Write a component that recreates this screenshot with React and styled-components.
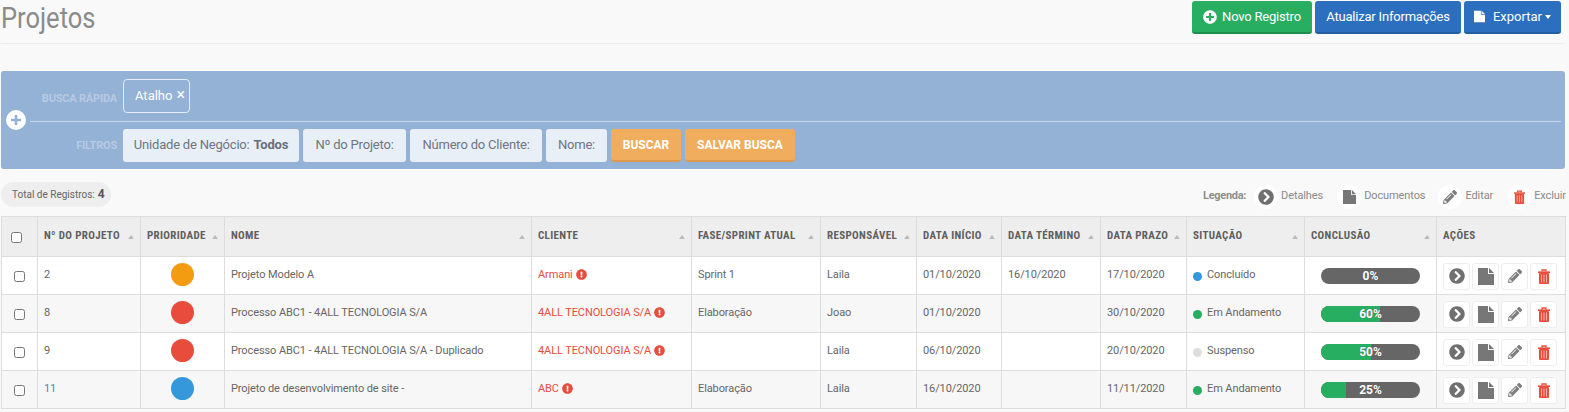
import React from "react";
import styled, { createGlobalStyle } from "styled-components";
import { FaPlusCircle, FaPencilAlt, FaChevronCircleRight, FaExclamationCircle } from "react-icons/fa";

const Global = createGlobalStyle`
  html, body { margin: 0; padding: 0; background: #f9f9f9; }
  body { font-family: Roboto, "Liberation Sans", sans-serif; color: #666; overflow: hidden; }
`;
const Page = styled.div`width: 1569px; height: 412px; padding: 0 4px 0 1px; box-sizing: border-box; overflow: hidden;`;
const Header = styled.header`
  display: flex; justify-content: space-between; align-items: flex-start;
  height: 44px; box-sizing: border-box; border-bottom: 1px solid #eee; padding-top: 1px;
`;
const Title = styled.h1`
  margin: 0; padding: 0; font-weight: 400; font-size: 30px; line-height: 34px; color: #8b8b8b;
  transform: scaleX(0.85); transform-origin: left center;
`;
const Actions = styled.div`display: flex; gap: 3px; margin-right: 4px;`;
const TopButton = styled.button`
  height: 33px; box-sizing: border-box; border: 0; border-bottom: 2px solid ${p => p.$dark}; border-radius: 3px;
  background: ${p => p.$bg}; color: #fff; font: 400 13px Roboto, sans-serif; letter-spacing: ${p => p.$ls ?? -0.2}px; width: ${p => p.$w}px;
  display: flex; align-items: center; justify-content: center; gap: ${p => p.$gap || 5}px; padding: 0;
`;
const Caret = styled.span`width: 0; height: 0; border: 3.5px solid transparent; border-top: 4px solid #fff; border-bottom: 0; margin-left: -5px;`;
const Panel = styled.section`
  position: relative; margin-top: 27px; height: 98px; background: #94b1d6; border-radius: 3px; box-sizing: border-box; padding-top: 8px;
`;
const AddCircle = styled.span`
  position: absolute; left: 5px; top: 39px; width: 20px; height: 20px; border-radius: 50%; background: #fff;
  display: flex; align-items: center; justify-content: center;
`;
const FilterRow = styled.div`
  display: flex; align-items: flex-start; gap: 4px; margin-left: 29px; margin-right: 4px;
  height: ${p => p.$h}px; padding-top: ${p => p.$pt || 0}px; box-sizing: border-box;
  ${p => p.$line && "border-bottom: 1px solid #c8d8eb;"}
`;
const FilterLabel = styled.span`
  width: 87px; margin-right: 2px; margin-top: ${p => p.$mt}px; text-align: right; flex: none; font-size: 11px; font-weight: 700; color: #b8cae3; letter-spacing: -0.2px;
`;
const Chip = styled.span`
  width: 67px; height: 34px; box-sizing: border-box; border: 1px solid #e4ecf6; border-radius: 4px; color: #fff; font-size: 13px;
  display: flex; align-items: center; gap: 4px; padding: 0 0 2px 11px;
`;
const ChipClose = styled.span`font-size: 16px; line-height: 16px;`;
const Filter = styled.span`
  width: ${p => p.$w}px; height: 33px; box-sizing: border-box; background: #e9eff7; border-radius: 3px; color: #6d7683; font-size: 13px; letter-spacing: -0.2px;
  display: flex; align-items: center; justify-content: center; flex: none; white-space: nowrap; padding-bottom: 2px;
  strong { margin-left: 4px; color: #66707c; }
`;
const OrangeButton = styled.button`
  width: ${p => p.$w}px; height: 33px; box-sizing: border-box; border: 0; border-bottom: 2px solid #dd9a4e; border-radius: 3px; background: #f0ad5e;
  color: #fff; font: 700 12px Roboto, sans-serif; padding: 0; flex: none;
`;
const InfoBar = styled.div`display: flex; justify-content: space-between; align-items: center; height: 47px; box-sizing: border-box; padding-top: 3px;`;
const Total = styled.span`
  width: 110px; height: 25px; border-radius: 13px; background: #eee; color: #666; font-size: 10px; display: flex; align-items: center; box-sizing: border-box; padding-left: 11px;
  strong { margin-left: 3px; font-size: 12px; color: #555; }
`;
const Legend = styled.div`display: flex; align-items: center; font-size: 11px; color: #8a8a8a; margin-right: -1px;`;
const LegendTitle = styled.strong`margin: 2px 8px 0 0; font-weight: 700; color: #8e8e8e; font-size: 11px; letter-spacing: -0.3px;`;
const LegendItem = styled.span`display: flex; align-items: center; gap: 3px; margin-right: ${p => p.$mr}px;`;
const LegendCircle = styled.span`
  width: 24px; height: 24px; border-radius: 50%; background: #fff; display: flex; align-items: center; justify-content: center; margin-top: 6px; flex: none;
`;
const LegendText = styled.span`margin-top: 2px; letter-spacing: -0.1px;`;
const Table = styled.table`
  width: 1564px; border-collapse: collapse; table-layout: fixed; font-size: 11px; color: #666; letter-spacing: -0.1px;
`;
const Th = styled.th`
  height: 40px; box-sizing: border-box; background: #eee; border: 1px solid #ddd; padding: 0 6px; text-align: left; vertical-align: middle;
  font-size: 11px; font-weight: 700; font-stretch: 75%; color: #5f5f5f; letter-spacing: 0.35px; white-space: nowrap;
`;
const ThInner = styled.div`display: flex; align-items: center; justify-content: space-between; margin-top: -2px;`;
const Sort = styled.span`width: 0; height: 0; border: 3.5px solid transparent; border-bottom: 4px solid #bbb; border-top: 0; margin-top: 2px; flex: none;`;
const Row = styled.tr`background: ${p => p.$alt ? "#f7f7f7" : "#fff"};`;
const Td = styled.td`
  height: 38px; box-sizing: border-box; border: 1px solid #ddd; padding: 0 6px; vertical-align: middle; white-space: nowrap;
`;
const CheckCell = styled(Td)`padding: 0;`;
const HeadCheckCell = styled(Th)`padding: 0;`;
const Check = styled.input.attrs({ type: "checkbox" })`
  width: 11px; height: 11px; margin: ${p => p.$head ? "2px 0 0 9px" : "2px 0 0 12px"}; display: block; accent-color: #666;
`;
const Priority = styled.span`display: block; width: 23px; height: 23px; border-radius: 50%; background: ${p => p.$c}; margin: -2px auto 0;`;
const CellText = styled.span`position: relative; top: -1px; color: ${p => p.$c || "inherit"};`;
const ClientCell = styled.span`display: inline-flex; align-items: center; gap: 3px; color: #e74c3c; position: relative; top: -1px;`;
const StatusCell = styled.span`display: flex; align-items: center; gap: 5px;`;
const Dot = styled.span`width: 9px; height: 9px; border-radius: 50%; background: ${p => p.$c}; flex: none; margin-top: 1px;`;
const Bar = styled.div`
  position: relative; width: 99px; height: 16px; margin: 1px auto 0; border-radius: 8px; background: #666; overflow: hidden;
`;
const Fill = styled.div`height: 100%; background: #27ae60;`;
const BarLabel = styled.span`
  position: absolute; inset: 0; display: flex; align-items: center; justify-content: center; color: #fff; font-size: 12px; font-weight: 700; letter-spacing: 0;
  text-shadow: 0 0 1px #555;
`;
const ActionRow = styled.div`display: flex; gap: 2px; margin-top: 1px;`;
const ActionButton = styled.span`
  width: 27px; height: 27px; box-sizing: border-box; background: #fff; border: 1px solid #eee; border-radius: 3px;
  display: flex; align-items: center; justify-content: center; flex: none;
`;

const widths = [36, 103, 84, 307, 160, 129, 96, 85, 99, 86, 118, 132, 129];
const heads = [
  ["Nº DO PROJETO", 1], ["PRIORIDADE", 1], ["NOME", 1], ["CLIENTE", 1], ["FASE/SPRINT ATUAL", 1], ["RESPONSÁVEL", 1],
  ["DATA INÍCIO", 1], ["DATA TÉRMINO", 1], ["DATA PRAZO", 1], ["SITUAÇÃO", 1], ["CONCLUSÃO", 1], ["AÇÕES", 0],
];
const rows = [
  { id: "2", pr: "#f39c12", nome: "Projeto Modelo A", cli: "Armani", fase: "Sprint 1", resp: "Laila", ini: "01/10/2020", fim: "16/10/2020", prazo: "17/10/2020", sit: "Concluído", sc: "#3498db", pct: 0 },
  { id: "8", pr: "#e74c3c", nome: "Processo ABC1 - 4ALL TECNOLOGIA S/A", cli: "4ALL TECNOLOGIA S/A", fase: "Elaboração", resp: "Joao", ini: "01/10/2020", fim: "", prazo: "30/10/2020", sit: "Em Andamento", sc: "#27ae60", pct: 60 },
  { id: "9", pr: "#e74c3c", nome: "Processo ABC1 - 4ALL TECNOLOGIA S/A - Duplicado", cli: "4ALL TECNOLOGIA S/A", fase: "", resp: "Laila", ini: "06/10/2020", fim: "", prazo: "20/10/2020", sit: "Suspenso", sc: "#ddd", pct: 50 },
  { id: "11", pr: "#3498db", nome: "Projeto de desenvolvimento de site -", cli: "ABC", fase: "Elaboração", resp: "Laila", ini: "16/10/2020", fim: "", prazo: "11/11/2020", sit: "Em Andamento", sc: "#27ae60", pct: 25, link: true },
];

const IconChevron = () => <FaChevronCircleRight size={16} color="#707070" />;
const IconFile = ({ w = 16, h = 17, c = "#777" }) => (
  <svg width={w} height={h} viewBox="0 0 16 17">
    <path d="M0 0H10V6H16V17H0Z" fill={c} />
    <path d="M11 0L16 5H11Z" fill={c} />
  </svg>
);
const IconPencil = () => <FaPencilAlt size={14} color="#7d7d7d" />;
const IconTrash = ({ w = 12, h = 15 }) => (
  <svg width={w} height={h} viewBox="0 0 12 15">
    <path d="M4 2.6V1h4v1.6" fill="none" stroke="#e74c3c" strokeWidth="1.3" />
    <rect x="0" y="2.4" width="12" height="1.6" fill="#e74c3c" />
    <rect x="1" y="4" width="10" height="11" rx="1" fill="#e74c3c" />
    <path d="M3.5 5.5v8M6 5.5v8M8.5 5.5v8" stroke="#f6b3aa" strokeWidth="1" />
  </svg>
);

export default function App() {
  return (
    <Page>
      <Global />
      <Header>
        <Title>Projetos</Title>
        <Actions>
          <TopButton $bg="#27ae60" $dark="#1f8f4e" $w={120}><FaPlusCircle size={14} />Novo Registro</TopButton>
          <TopButton $bg="#2b6fbe" $dark="#245fa3" $w={146}>Atualizar Informações</TopButton>
          <TopButton $bg="#2b6fbe" $dark="#245fa3" $w={97} $gap={8} $ls={0}><IconFile w={11} h={13} c="#fff" />Exportar<Caret /></TopButton>
        </Actions>
      </Header>
      <Panel>
        <AddCircle>
          <svg width="12" height="12" viewBox="0 0 12 12"><path d="M6 1v10M1 6h10" stroke="#94b1d6" strokeWidth="2.6" /></svg>
        </AddCircle>
        <FilterRow $line $h={43}>
          <FilterLabel $mt={13}>BUSCA RÁPIDA</FilterLabel>
          <Chip>Atalho <ChipClose>×</ChipClose></Chip>
        </FilterRow>
        <FilterRow $h={47} $pt={7}>
          <FilterLabel $mt={10}>FILTROS</FilterLabel>
          <Filter $w={176}>Unidade de Negócio: <strong>Todos</strong></Filter>
          <Filter $w={103}>Nº do Projeto:</Filter>
          <Filter $w={132}>Número do Cliente:</Filter>
          <Filter $w={61}>Nome:</Filter>
          <OrangeButton $w={70}>BUSCAR</OrangeButton>
          <OrangeButton $w={110}>SALVAR BUSCA</OrangeButton>
        </FilterRow>
      </Panel>
      <InfoBar>
        <Total>Total de Registros: <strong>4</strong></Total>
        <Legend>
          <LegendTitle>Legenda:</LegendTitle>
          <LegendItem $mr={14}><LegendCircle><IconChevron /></LegendCircle><LegendText>Detalhes</LegendText></LegendItem>
          <LegendItem $mr={13}><LegendCircle><IconFile w={13} h={16} /></LegendCircle><LegendText>Documentos</LegendText></LegendItem>
          <LegendItem $mr={14}><LegendCircle><IconPencil /></LegendCircle><LegendText>Editar</LegendText></LegendItem>
          <LegendItem $mr={0}><LegendCircle><IconTrash w={11} h={14} /></LegendCircle><LegendText>Excluir</LegendText></LegendItem>
        </Legend>
      </InfoBar>
      <Table>
        <colgroup>{widths.map((w, i) => <col key={i} style={{ width: w }} />)}</colgroup>
        <thead>
          <tr>
            <HeadCheckCell><Check $head /></HeadCheckCell>
            {heads.map(([h, s]) => <Th key={h}><ThInner>{h}{s ? <Sort /> : null}</ThInner></Th>)}
          </tr>
        </thead>
        <tbody>
          {rows.map((r, i) => (
            <Row key={r.id} $alt={i % 2 === 1}>
              <CheckCell><Check /></CheckCell>
              <Td><CellText $c={r.link ? "#4a86b8" : undefined}>{r.id}</CellText></Td>
              <Td><Priority $c={r.pr} /></Td>
              <Td><CellText>{r.nome}</CellText></Td>
              <Td><ClientCell>{r.cli}<FaExclamationCircle size={11} /></ClientCell></Td>
              <Td><CellText>{r.fase}</CellText></Td>
              <Td><CellText>{r.resp}</CellText></Td>
              <Td><CellText>{r.ini}</CellText></Td>
              <Td><CellText>{r.fim}</CellText></Td>
              <Td><CellText>{r.prazo}</CellText></Td>
              <Td><StatusCell><Dot $c={r.sc} /><CellText>{r.sit}</CellText></StatusCell></Td>
              <Td><Bar><Fill style={{ width: `${r.pct}%` }} /><BarLabel>{r.pct}%</BarLabel></Bar></Td>
              <Td>
                <ActionRow>
                  <ActionButton><IconChevron /></ActionButton>
                  <ActionButton><IconFile /></ActionButton>
                  <ActionButton><IconPencil /></ActionButton>
                  <ActionButton><IconTrash /></ActionButton>
                </ActionRow>
              </Td>
            </Row>
          ))}
        </tbody>
      </Table>
    </Page>
  );
}
